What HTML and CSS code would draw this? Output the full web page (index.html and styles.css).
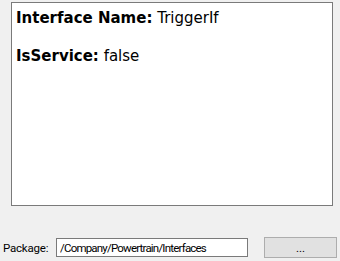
FILE: index.html
```html
<!DOCTYPE html>
<html lang="en">
<head>
    <meta charset="UTF-8">
    <title>Interface Details</title>
    <link rel="stylesheet" href="styles.css">
</head>
<body>
    <div class="panel">
        <div class="details">
            <p class="field"><b>Interface Name:</b> TriggerIf</p>
            <p class="field"><b>IsService:</b> false</p>
        </div>
        <div class="package-row">
            <label for="packagePath">Package:</label>
            <input type="text" id="packagePath" value="/Company/Powertrain/Interfaces">
            <button id="browseButton">...</button>
        </div>
    </div>
</body>
</html>
```

FILE: styles.css
```css
body {
    margin: 0;
    background-color: #f0f0f0;
    font-family: "DejaVu Sans", Tahoma, sans-serif;
}
.panel {
    width: 340px;
    height: 261px;
    display: flex;
    flex-direction: column;
    overflow: hidden;
}
.details {
    margin: 2px 0 0 11px;
    width: 311px;
    height: 190px;
    background-color: white;
    border: 1px solid #7a7a7a;
    padding: 6px 5px 6px 4px;
    box-sizing: content-box;
}
.field {
    margin: 0 0 20px 0;
    font-size: 15px;
    line-height: 18px;
    color: #000;
}
.field b {
    font-weight: bold;
}
.package-row {
    margin-top: auto;
    margin-bottom: 3px;
    display: flex;
    align-items: center;
    font-family: Roboto, sans-serif;
    font-size: 11.5px;
    letter-spacing: -0.2px;
    color: #000;
}
.package-row label {
    margin-left: 3px;
    width: 53px;
}
.package-row input {
    width: 192px;
    height: 19px;
    box-sizing: border-box;
    border: 1px solid #7a7a7a;
    padding: 0 3px;
    font-family: Roboto, sans-serif;
    font-size: 11.5px;
    letter-spacing: -0.8px;
    color: #000;
    background-color: white;
}
.package-row button {
    margin-left: 16px;
    width: 73px;
    height: 21px;
    background-color: #e1e1e1;
    border: 1px solid #adadad;
    font-family: Roboto, sans-serif;
    font-size: 11.5px;
    color: #000;
    padding: 0;
}
```
